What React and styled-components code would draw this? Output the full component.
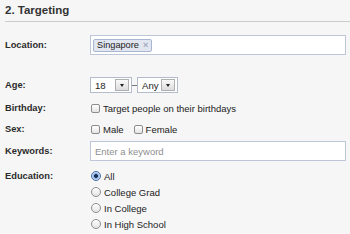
import React from "react";
import styled, { createGlobalStyle } from "styled-components";

const Global = createGlobalStyle`
  html, body { margin: 0; padding: 0; background: #f6f6f6; }
  body { font-family: "Liberation Sans", Arial, sans-serif; color: #333; }
  * { box-sizing: border-box; }
`;

const Page = styled.div`
  width: 350px;
  height: 234px;
  padding-left: 5px;
  overflow: hidden;
`;

const Header = styled.div`
  height: 22px;
  border-bottom: 1px solid #cccccc;
  display: flex;
  align-items: center;
`;

const Title = styled.h2`
  margin: 0;
  font-size: 11.5px;
  font-weight: bold;
  color: #333;
  line-height: 21px;
`;

const Form = styled.div`
  padding-right: 4px;
`;

const Row = styled.div`
  display: grid;
  grid-template-columns: 85px 1fr;
  align-items: ${(p) => (p.$top ? "start" : "center")};
  margin-top: ${(p) => p.$mt}px;
  min-height: ${(p) => p.$h}px;
`;

const Label = styled.div`
  font-size: 9.3px;
  font-weight: bold;
  color: #2b2b2b;
  line-height: 16px;
`;

const TokenInput = styled.div`
  height: 20px;
  border: 1px solid #bdc7d8;
  background: #fff;
  display: flex;
  align-items: center;
  padding-left: 2px;
`;

const Token = styled.span`
  height: 13px;
  display: inline-flex;
  align-items: center;
  gap: 4px;
  padding: 0 3px 0 3px;
  border: 1px solid #a9b6d0;
  border-radius: 2px;
  background: #e2e6f0;
  font-size: 9.2px;
  color: #222;
`;

const TokenX = styled.span`
  color: #a3abbb;
  font-size: 9px;
  font-weight: bold;
  line-height: 1;
`;

const Controls = styled.div`
  display: flex;
  align-items: center;
`;

const Select = styled.div`
  width: ${(p) => p.$w}px;
  height: 16px;
  border: 1px solid #b4bccb;
  background: #fff;
  display: flex;
  align-items: center;
  justify-content: space-between;
  padding: 0 2px 0 4px;
  font-size: 9.6px;
  color: #222;
`;

const SelectButton = styled.span`
  width: 14px;
  height: 12px;
  border: 1px solid #b0b0b0;
  background: linear-gradient(#fafafa, #dcdcdc);
  display: flex;
  align-items: center;
  justify-content: center;
  &::after {
    content: "";
    border-left: 2.5px solid transparent;
    border-right: 2.5px solid transparent;
    border-top: 3px solid #222;
  }
`;

const Dash = styled.span`
  width: 5px;
  height: 1px;
  background: #777;
`;

const Options = styled.div`
  display: flex;
  align-items: center;
  gap: 9px;
`;

const Option = styled.label`
  display: inline-flex;
  align-items: center;
  gap: 3px;
  font-size: 9.5px;
  color: #222;
  height: 16px;
`;

const Checkbox = styled.span`
  width: 9px;
  height: 9px;
  margin-left: 1px;
  border: 1px solid #8c8c8c;
  border-radius: 2px;
  background: linear-gradient(#ffffff, #e4e4e4);
`;

const Radio = styled.span`
  width: 10px;
  height: 10px;
  margin-left: 1px;
  border-radius: 50%;
  border: 1px solid ${(p) => (p.$on ? "#4a6fa8" : "#8c8c8c")};
  background: ${(p) =>
    p.$on
      ? "radial-gradient(circle, #1d2f55 0 1.6px, #8fb2e6 2.2px, #c9dcf5 4px)"
      : "linear-gradient(#ffffff, #e4e4e4)"};
`;

const TextInput = styled.input`
  width: 100%;
  height: 20px;
  border: 1px solid #bdc7d8;
  background: #fff;
  padding: 0 4px;
  font-family: "Liberation Sans", Arial, sans-serif;
  font-size: 9.5px;
  color: #333;
  outline: none;
  &::placeholder { color: #8f8f8f; }
`;

const RadioList = styled.div`
  display: flex;
  flex-direction: column;
`;

export default function App() {
  const education = ["All", "College Grad", "In College", "In High School"];
  return (
    <Page>
      <Global />
      <Header>
        <Title>2. Targeting</Title>
      </Header>
      <Form>
        <Row $mt={13} $h={20}>
          <Label>Location:</Label>
          <TokenInput>
            <Token>
              Singapore<TokenX>×</TokenX>
            </Token>
          </TokenInput>
        </Row>
        <Row $mt={22} $h={16}>
          <Label>Age:</Label>
          <Controls>
            <Select $w={42}>
              18<SelectButton />
            </Select>
            <Dash />
            <Select $w={41}>
              Any<SelectButton />
            </Select>
          </Controls>
        </Row>
        <Row $mt={7} $h={16}>
          <Label>Birthday:</Label>
          <Options>
            <Option>
              <Checkbox />
              Target people on their birthdays
            </Option>
          </Options>
        </Row>
        <Row $mt={5} $h={16}>
          <Label>Sex:</Label>
          <Options>
            <Option>
              <Checkbox />
              Male
            </Option>
            <Option>
              <Checkbox />
              Female
            </Option>
          </Options>
        </Row>
        <Row $mt={4} $h={20}>
          <Label>Keywords:</Label>
          <TextInput placeholder="Enter a keyword" />
        </Row>
        <Row $mt={7} $h={64} $top>
          <Label>Education:</Label>
          <RadioList>
            {education.map((e, i) => (
              <Option key={e}>
                <Radio $on={i === 0} />
                {e}
              </Option>
            ))}
          </RadioList>
        </Row>
      </Form>
    </Page>
  );
}
